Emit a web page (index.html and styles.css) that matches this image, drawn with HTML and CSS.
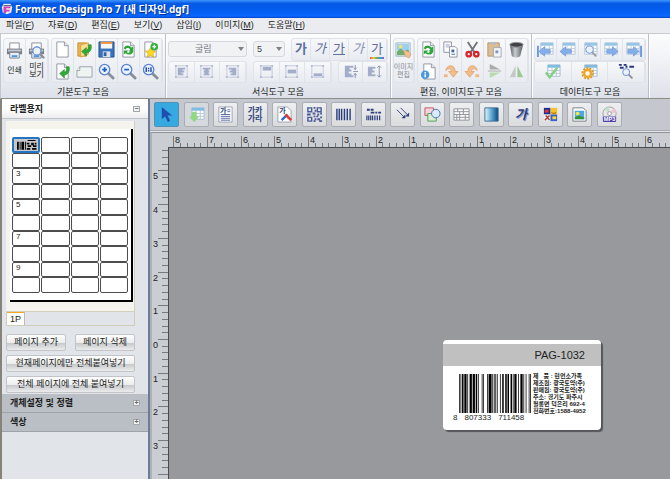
FILE: index.html
```html
<!DOCTYPE html>
<html lang="ko">
<head>
    <meta charset="utf-8">
    <title>Formtec Design Pro 7 [새 디자인.dgf]</title>
    <meta name="viewport" content="width=device-width, initial-scale=1">
    <link rel="stylesheet" href="styles.css">
</head>
<body>
<svg class="sprite" aria-hidden="true">
    <defs>
        <linearGradient id="blue-fade"><stop offset="0" stop-color="#e8f7fc"/><stop offset=".5" stop-color="#5fa9d0"/><stop offset="1" stop-color="#064a86"/></linearGradient>
        <linearGradient id="bin-fade"><stop offset="0" stop-color="#55585c"/><stop offset=".4" stop-color="#c9ccd0"/><stop offset="1" stop-color="#55585c"/></linearGradient>
    </defs>
    <symbol id="printer" viewBox="0 0 18 18">
        <path d="M4 1h10v7H4z" fill="#fff" stroke="#8a8d93"/>
        <path d="M1 7h16v6H1z" fill="#7b7f88"/>
        <path d="M2 8h14v2H2z" fill="#c4c8cf"/>
        <path d="M4 11h10v6H4z" fill="#e8f1fb" stroke="#7d828b"/>
        <path d="M6 14h6v2H6z" fill="#4f96dd"/>
    </symbol>
    <symbol id="page" viewBox="0 0 18 18">
        <path d="M3 1h8l4 4v12H3z" fill="#fff" stroke="#8f96a3"/>
        <path d="M11 1v4h4" fill="#e3e6ec" stroke="#8f96a3"/>
    </symbol>
    <symbol id="glass" viewBox="0 0 18 18">
        <path d="M11 11l5 5" stroke="#8b8f99" stroke-width="3" stroke-linecap="round"/>
        <circle cx="7" cy="7" r="5.5" fill="#e9f2fd" stroke="#5b84cd" stroke-width="1.4"/>
    </symbol>
    <symbol id="green-arrow" viewBox="0 0 18 18">
        <path d="M16 4c1 5-1 8-5 9v3l-5-5 5-4v3c2-1 3-3 2-6z" fill="#2eaa35" stroke="#1b8a28" stroke-width=".6"/>
    </symbol>
    <symbol id="open" viewBox="0 0 18 18">
        <path d="M2 2h9v14H2z" fill="#e9b552" stroke="#c98f2d"/>
        <path d="M5 4l8-2v12l-8 3z" fill="#fbdf97" stroke="#d6a043"/>
        <use href="#green-arrow"/>
    </symbol>
    <symbol id="save" viewBox="0 0 18 18">
        <path d="M1 1h16v16H1z" fill="#3973bb" stroke="#27568f"/>
        <path d="M3 1h12v7H3z" fill="#f5f6f8"/><path d="M3 1h12v2H3z" fill="#ef8d39"/>
        <path d="M5 11h8v6H5z" fill="#dfe4ec"/><path d="M6 12h3v4H6z" fill="#2f5f9d"/>
    </symbol>
    <symbol id="refresh" viewBox="0 0 18 18">
        <use href="#page"/>
        <path d="M4 8c1-4 6-4 8-1l2-1v5H9l2-2C9 7 7 7 6 9zM14 11c-1 4-6 4-8 2l-2 1V10h5l-2 2c2 1 3 0 4-1z" fill="#2da63a"/>
    </symbol>
    <symbol id="star" viewBox="0 0 18 18">
        <use href="#page"/>
        <path d="M9 7l1.600 3.300 3.700.5-2.700 2.600.7 3.600L9 15.300 5.700 17l.7-3.600L3.700 10.800l3.700-.5z" fill="#ffd91f" stroke="#d9a307" stroke-width=".7"/>
        <circle cx="13" cy="6" r="4" fill="#31b23a"/><path d="M13 4v4M11 6h4" stroke="#fff" stroke-width="1.4"/>
    </symbol>
    <symbol id="import" viewBox="0 0 18 18">
        <use href="#page"/><use href="#green-arrow"/>
    </symbol>
    <symbol id="sheet" viewBox="0 0 18 18">
        <path d="M4 4h13v11H1V8z" fill="#eef4f2" stroke="#97a3ab"/><path d="M4 4v4H1" fill="#fff" stroke="#97a3ab"/>
    </symbol>
    <symbol id="zoom-in" viewBox="0 0 18 18">
        <use href="#glass"/><path d="M7 4.500v5M4.500 7h5" stroke="#1e5ad0" stroke-width="1.800"/>
    </symbol>
    <symbol id="zoom-out" viewBox="0 0 18 18">
        <use href="#glass"/><path d="M4.500 7h5" stroke="#1e5ad0" stroke-width="1.800"/>
    </symbol>
    <symbol id="zoom-one" viewBox="0 0 18 18">
        <use href="#glass"/><path d="M4.500 4.500v5M9.500 4.500v5M7 5v1.500M7 7.500v1.500" stroke="#1e4ab0" stroke-width="1.500"/>
    </symbol>
    <symbol id="preview" viewBox="0 0 18 18">
        <use href="#printer"/><use href="#glass" x="4" y="4" width="14" height="14"/>
    </symbol>
    <symbol id="frame" viewBox="0 0 18 18">
        <path d="M3 3h12v12H3z" fill="none" stroke="#c3c9dc"/>
        <path d="M2 2h2v2H2zM14 2h2v2h-2zM2 14h2v2H2zM14 14h2v2h-2z" fill="#b3bbd3"/>
    </symbol>
    <symbol id="align-left" viewBox="0 0 18 18"><use href="#frame"/><path d="M5 5h8v2h-3v1h2v2H9v1h2v2H5z" fill="#a3acc8"/></symbol>
    <symbol id="align-center" viewBox="0 0 18 18"><use href="#frame"/><path d="M5 5h8v2h-2v1h1v2h-1v1h1v2H6v-2h1v-1H6V8h1V7H5z" fill="#a3acc8"/></symbol>
    <symbol id="align-right" viewBox="0 0 18 18"><use href="#frame"/><path d="M13 5H5v2h3v1H6v2h3v1H7v2h6z" fill="#a3acc8"/></symbol>
    <symbol id="align-top" viewBox="0 0 18 18"><use href="#frame"/><path d="M5 4h9v4H5z" fill="#a3acc8"/></symbol>
    <symbol id="align-middle" viewBox="0 0 18 18"><use href="#frame"/><path d="M5 7h9v4H5z" fill="#a3acc8"/></symbol>
    <symbol id="align-bottom" viewBox="0 0 18 18"><use href="#frame"/><path d="M5 11h9v3H5z" fill="#a3acc8"/></symbol>
    <symbol id="line-tight" viewBox="0 0 18 18">
        <path d="M3 3h9v2H8v2h2v2H7v2h3v2h2v2H3z" fill="#a3acc8"/><path d="M14 2v5M12.500 5l1.500 2 1.500-2M14 16v-5M12.500 13l1.500-2 1.500 2M12 9h5" stroke="#8994b5" fill="none"/>
    </symbol>
    <symbol id="line-wide" viewBox="0 0 18 18">
        <path d="M2 4h8v2H7v2h2v2H6v2h4v2H2z" fill="#a3acc8"/><path d="M14 3v12M12 5l2-2 2 2M12 13l2 2 2-2" stroke="#8994b5" fill="none"/>
    </symbol>
    <symbol id="picture" viewBox="0 0 18 18">
        <path d="M1 1h15v14H1z" fill="#fff" stroke="#7e9fb8"/><path d="M2 2h13v7H2z" fill="#86c6ee"/>
        <circle cx="6" cy="5" r="2" fill="#f6e04a"/><path d="M2 10l4-3 4 3 3-2 2 1v5H2z" fill="#4c9d4e"/>
    </symbol>
    <symbol id="picture-edit" viewBox="0 0 18 18"><use href="#picture"/><path d="M9 9l5 1 3 3-2 4-4-2z" fill="#f2b27a" stroke="#cf8144" stroke-width=".6"/></symbol>
    <symbol id="copy" viewBox="0 0 18 18">
        <path d="M2 1h8v11H2z" fill="#fff" stroke="#8d939e"/><path d="M4 3h4v4H4z" fill="#c5cde0"/>
        <path d="M8 6h6l2 2v9H8z" fill="#fff" stroke="#8d939e"/><path d="M10 9h3v3h-3z" fill="#4567a9"/><path d="M10 14h4" stroke="#4567a9"/>
    </symbol>
    <symbol id="cut" viewBox="0 0 18 18">
        <path d="M4 1l7 11M14 1L7 12" stroke="#70757c" stroke-width="2"/>
        <g fill="none" stroke="#d8232b" stroke-width="2.400"><circle cx="5" cy="14" r="2.400"/><circle cx="13" cy="14" r="2.400"/></g>
    </symbol>
    <symbol id="paste" viewBox="0 0 18 18">
        <path d="M2 2h12v14H2z" fill="#ddbd93" stroke="#b79568"/><path d="M5 1h6v3H5z" fill="#b9bcc3"/>
        <path d="M8 7h8v10H8z" fill="#f4f6fa" stroke="#a3a9b7"/><path d="M10 10h3v3h-3z" fill="#7f95c3"/>
    </symbol>
    <symbol id="trash" viewBox="0 0 18 18">
        <path d="M2 4l2 12c1 2 8 2 9 0l3-12z" fill="url(#bin-fade)"/><ellipse cx="9" cy="4" rx="7" ry="2.500" fill="#3f4246" stroke="#909499"/>
    </symbol>
    <symbol id="info" viewBox="0 0 18 18">
        <use href="#page" x="1"/><circle cx="5.500" cy="12.500" r="4.500" fill="#4b98dc"/><path d="M5.500 9.500v1.500M5.500 12v3" stroke="#fff" stroke-width="1.600"/>
    </symbol>
    <symbol id="rotate" viewBox="0 0 18 18">
        <path d="M4 8c1-7 10-7 10 1h3l-5 6-5-6h3c0-3-3-4-6-1z" fill="#f3bd8b" stroke="#dd9a5e" stroke-width=".7"/>
        <path d="M2 12h4v3H2z" fill="#f0b783"/>
    </symbol>
    <symbol id="flip-v" viewBox="0 0 18 18"><path d="M4 1l11 6H4z" fill="#a9ada9"/><path d="M4 16l11-6H4z" fill="#b9d9ae"/><path d="M2 8.500h14" stroke="#aaa"/></symbol>
    <symbol id="flip-h" viewBox="0 0 18 18"><path d="M8 3v12H2z" fill="#c3c7ca"/><path d="M10 3v12h6z" fill="#9cc794"/></symbol>
    <symbol id="grid" viewBox="0 0 18 18">
        <path d="M4 2h13v12H4z" fill="#fff" stroke="#a8bcd2"/><path d="M4 2h13v3H4z" fill="#7fbbe2"/>
        <path d="M4 8h13M4 11h13M8.500 5v9M13 5v9" stroke="#b7c6d6"/>
    </symbol>
    <symbol id="arrow-left" viewBox="0 0 18 18"><path d="M1 11l6-5v3h6v4H7v3z" fill="#6a9fe9" stroke="#3c77cf" stroke-width=".6"/></symbol>
    <symbol id="arrow-right" viewBox="0 0 18 18"><path d="M16 11l-6-5v3H4v4h6v3z" fill="#6a9fe9" stroke="#3c77cf" stroke-width=".6"/></symbol>
    <symbol id="first" viewBox="0 0 18 18"><use href="#grid"/><use href="#arrow-left" x="1"/><path d="M1 5v12" stroke="#4a84dc" stroke-width="2"/></symbol>
    <symbol id="prev" viewBox="0 0 18 18"><use href="#grid"/><use href="#arrow-left"/></symbol>
    <symbol id="find" viewBox="0 0 18 18"><use href="#grid"/><use href="#glass" x="4" y="4" width="13" height="13"/></symbol>
    <symbol id="next" viewBox="0 0 18 18"><use href="#grid" x="-2"/><use href="#arrow-right"/></symbol>
    <symbol id="last" viewBox="0 0 18 18"><use href="#grid" x="-2"/><use href="#arrow-right" x="-1"/><path d="M17 5v12" stroke="#4a84dc" stroke-width="2"/></symbol>
    <symbol id="check" viewBox="0 0 18 18"><use href="#grid"/><path d="M2 10l4 5 8-10" fill="none" stroke="#86cf86" stroke-width="2.600"/></symbol>
    <symbol id="gear" viewBox="0 0 18 18">
        <use href="#grid"/><circle cx="7" cy="11" r="5.500" fill="none" stroke="#dc951c" stroke-width="2" stroke-dasharray="2 1.400"/>
        <circle cx="7" cy="11" r="3.600" fill="#fff" stroke="#efa92a" stroke-width="2.600"/>
    </symbol>
    <symbol id="search-code" viewBox="0 0 18 18">
        <path d="M1 2h3M6 2h3M12 4h5M2 5h4M8 4h2" stroke="#27397c" stroke-width="2"/><use href="#glass" x="4" y="5" width="12" height="12"/>
    </symbol>
    <symbol id="cursor" viewBox="0 0 18 18"><path d="M4 1v13l3.500-3 3 6 2.500-1.500-3-5.500H15z" fill="#1f4fae"/></symbol>
    <symbol id="grid-down" viewBox="0 0 18 18"><use href="#grid"/><path d="M4 6h5v5h3l-5.500 6L1 11h3z" fill="#8fd982"/></symbol>
    <symbol id="text-page" viewBox="0 0 18 18">
        <path d="M2 1h14v16H2z" fill="#fff" stroke="#9ba2b4"/><path d="M11 4h3M11 6h3M4 9h10M4 11h10M4 13h10M4 15h10" stroke="#5767a0"/>
    </symbol>
    <symbol id="text-pen" viewBox="0 0 18 18">
        <path d="M2 1h10l4 4v12H2z" fill="#fff" stroke="#9ba2b4"/><path d="M6 15l6-6" stroke="#2767cf" stroke-width="2.400"/><path d="M10 9l6 6" stroke="#e03a32" stroke-width="2.800"/>
    </symbol>
    <symbol id="qr" viewBox="0 0 18 18">
        <path d="M2 2h4v4H2zM12 2h4v4h-4zM2 12h4v4H2z" fill="none" stroke="#4b5b96" stroke-width="1.500"/>
        <path d="M8 2h2M9 5h2M7 8h3M1 9h4M12 9h2M15 8h2M8 11h2M11 11h2M15 12h2M9 14h2M12 14h3M8 16h2M14 16h3" stroke="#4b5b96" stroke-width="2"/>
    </symbol>
    <symbol id="bars" viewBox="0 0 18 18"><path d="M2 3v12M4.500 3v12M7 3v12M10 3v12M13 3v12M16 3v12" stroke="#2b3d7e" stroke-width="1.500"/></symbol>
    <symbol id="bars-text" viewBox="0 0 18 18">
        <path d="M2 4h3M6 4h3M6 7h4M11 7h2M14 7h3" stroke="#2f3f7d" stroke-width="2"/><path d="M2 10v5M4 10v5M6 10v5M8 10v5M10.500 10v5M13 10v5M15.500 10v5" stroke="#2f3f7d" stroke-width="1.300"/>
    </symbol>
    <symbol id="lines" viewBox="0 0 18 18"><path d="M3 4l8 8M7 2l8 8" stroke="#31427f"/><path d="M12 13H8l4-4zM16 11h-4l4-4z" fill="#31427f"/></symbol>
    <symbol id="shapes" viewBox="0 0 18 18">
        <path d="M1 2h9v8H1z" fill="#f6d3d8" stroke="#c0566a"/><path d="M4 8h9v8H4z" fill="#d8efd2" stroke="#4f9a52"/><circle cx="12.500" cy="8" r="4.500" fill="#dcebfa" stroke="#3f6fb6"/>
    </symbol>
    <symbol id="table" viewBox="0 0 18 18"><path d="M1 3h16v12H1zM1 6h16M1 9h16M1 12h16M5 3v3M11 3v6M7 6v9M13 9v6M4 9v6" fill="#fbfbfb" stroke="#8f9399"/></symbol>
    <symbol id="gradient" viewBox="0 0 18 18"><path d="M2 2h14v14H2z" fill="url(#blue-fade)" stroke="#3d6a92"/></symbol>
    <symbol id="clipart" viewBox="0 0 18 18">
        <path d="M2 2h7v7H2z" fill="#1d2c9b"/><path d="M3 4h4v3H3z" fill="#e5352c"/><path d="M9 2h7v7H9z" fill="#f4c22b"/><path d="M10 7c2 1 3 1 5 0" stroke="#a55a00" fill="none"/>
        <path d="M2 9h7v7H2z" fill="#e9eef8"/><path d="M3 15l5-5M4 10l4 5" stroke="#b13d2f" stroke-width="1.500"/><path d="M9 9h7v7H9z" fill="#3a61c7"/><path d="M11 11h4v3h-4z" fill="#f2da3c"/>
    </symbol>
    <symbol id="photo" viewBox="0 0 18 18">
        <path d="M2 2h11l3 3v11H2z" fill="#fff" stroke="#777d84"/><path d="M4 5h10v9H4z" fill="#4ca8e4"/><circle cx="7" cy="8" r="2" fill="#f7e93e"/><path d="M4 12l4-2 6 2v2H4z" fill="#36933c"/>
    </symbol>
    <symbol id="disc" viewBox="0 0 18 18">
        <circle cx="9" cy="8" r="7" fill="#e8e6ea" stroke="#a3a1a8"/><path d="M9 8L4 3.500A7 7 0 0 1 8 1z" fill="#bfe3c4"/><path d="M9 8l5-5.500a7 7 0 0 1 2 4z" fill="#f1c2d2"/>
        <circle cx="9" cy="8" r="2" fill="#fff" stroke="#999"/><rect x="2" y="11" width="14" height="6" rx="1" fill="#5043ad"/>
        <text x="9" y="16" font-size="6" font-weight="bold" text-anchor="middle" fill="#fff">MP3</text>
    </symbol>
</svg>

<header class="titlebar">
    <svg class="logo" viewBox="0 0 14 14"><path d="M3 1h8l2 4-1 6-5 2-5-2-1-6z" fill="#e8ebf2"/><path d="M3 4h8v2H6v2h4v2H6v2H3z" fill="#d23fb0"/><path d="M3 3h9" stroke="#444c63"/></svg>
    <h1>Formtec Design Pro 7 [새 디자인.dgf]</h1>
</header>
<nav class="menubar">
    <a href="#file">파일(<u>F</u>)</a>
    <a href="#data">자료(<u>D</u>)</a>
    <a href="#edit">편집(<u>E</u>)</a>
    <a href="#view">보기(<u>V</u>)</a>
    <a href="#insert">삽입(<u>I</u>)</a>
    <a href="#image">이미지(<u>M</u>)</a>
    <a href="#help">도움말(<u>H</u>)</a>
</nav>

<div class="ribbon">
    <section class="group">
        <div class="group-body">
            <div class="tools tall">
                <button><svg><use href="#printer"/></svg><span>인쇄</span></button>
                <button><svg><use href="#preview"/></svg><span>미리<br>보기</span></button>
            </div>
            <div class="tools">
                <button aria-label="새로 만들기"><svg><use href="#page"/></svg></button>
                <button aria-label="열기"><svg><use href="#open"/></svg></button>
                <button aria-label="저장"><svg><use href="#save"/></svg></button>
                <button aria-label="바꾸기"><svg><use href="#refresh"/></svg></button>
                <button aria-label="즐겨찾기"><svg><use href="#star"/></svg></button>
                <button aria-label="가져오기"><svg><use href="#import"/></svg></button>
                <button aria-label="용지"><svg><use href="#sheet"/></svg></button>
                <button aria-label="확대"><svg><use href="#zoom-in"/></svg></button>
                <button aria-label="축소"><svg><use href="#zoom-out"/></svg></button>
                <button aria-label="원래 크기"><svg><use href="#zoom-one"/></svg></button>
            </div>
        </div>
        <h2>기본도구 모음</h2>
    </section>
    <section class="group">
        <div class="group-body format">
            <div class="format-row">
                <select class="font-name" aria-label="글꼴"><option>굴림</option></select>
                <select class="font-size" aria-label="크기"><option>5</option></select>
                <div class="tools letters">
                    <button class="bold">가</button>
                    <button class="italic">가</button>
                    <button class="underline">가</button>
                    <button class="outline">가</button>
                    <button class="color">가</button>
                </div>
            </div>
            <div class="format-row">
                <div class="tools wide">
                    <button aria-label="왼쪽"><svg><use href="#align-left"/></svg></button>
                    <button aria-label="가운데"><svg><use href="#align-center"/></svg></button>
                    <button aria-label="오른쪽"><svg><use href="#align-right"/></svg></button>
                </div>
                <div class="tools wide">
                    <button aria-label="위"><svg><use href="#align-top"/></svg></button>
                    <button aria-label="중간"><svg><use href="#align-middle"/></svg></button>
                    <button aria-label="아래"><svg><use href="#align-bottom"/></svg></button>
                </div>
                <div class="tools pair">
                    <button aria-label="줄 간격 좁게"><svg><use href="#line-tight"/></svg></button>
                    <button aria-label="줄 간격 넓게"><svg><use href="#line-wide"/></svg></button>
                </div>
            </div>
        </div>
        <h2>서식도구 모음</h2>
    </section>
    <section class="group">
        <div class="group-body">
            <div class="tools tall single">
                <button class="disabled"><svg><use href="#picture-edit"/></svg><span>이미지<br>편집</span></button>
            </div>
            <div class="tools">
                <button aria-label="복제"><svg><use href="#refresh"/></svg></button>
                <button aria-label="복사"><svg><use href="#copy"/></svg></button>
                <button aria-label="잘라내기"><svg><use href="#cut"/></svg></button>
                <button aria-label="붙여넣기"><svg><use href="#paste"/></svg></button>
                <button aria-label="삭제"><svg><use href="#trash"/></svg></button>
                <button aria-label="정보"><svg><use href="#info"/></svg></button>
                <button aria-label="오른쪽 회전"><svg><use href="#rotate"/></svg></button>
                <button aria-label="왼쪽 회전"><svg class="mirror"><use href="#rotate"/></svg></button>
                <button aria-label="상하 대칭"><svg><use href="#flip-v"/></svg></button>
                <button aria-label="좌우 대칭"><svg><use href="#flip-h"/></svg></button>
            </div>
        </div>
        <h2>편집, 이미지도구 모음</h2>
    </section>
    <section class="group">
        <div class="group-body stacked">
            <div class="tools faint">
                <button aria-label="처음"><svg><use href="#first"/></svg></button>
                <button aria-label="이전"><svg><use href="#prev"/></svg></button>
                <button aria-label="찾기"><svg><use href="#find"/></svg></button>
                <button aria-label="다음"><svg><use href="#next"/></svg></button>
                <button aria-label="마지막"><svg><use href="#last"/></svg></button>
            </div>
            <div class="tools thirds">
                <button aria-label="선택"><svg><use href="#check"/></svg></button>
                <button aria-label="설정"><svg><use href="#gear"/></svg></button>
                <button aria-label="코드 검색"><svg><use href="#search-code"/></svg></button>
            </div>
        </div>
        <h2>데이터도구 모음</h2>
    </section>
</div>

<div class="workspace">
    <aside class="sidebar">
        <h2 class="panel-title">라벨용지<button class="toggle" aria-label="접기">−</button></h2>
        <div class="panel">
            <div class="preview">
                <div class="sheet">
                    <div class="cells" id="cells"></div>
                </div>
            </div>
            <div class="tabs"><button class="tab">1P</button></div>
            <div class="actions">
                <button>페이지 추가</button>
                <button>페이지 삭제</button>
                <button class="full">현재페이지에만 전체붙여넣기</button>
                <button class="full">전체 페이지에 전체 붙여넣기</button>
            </div>
        </div>
        <h2 class="panel-title closed">개체설정 및 정렬<button class="toggle" aria-label="펼치기">+</button></h2>
        <h2 class="panel-title closed">색상<button class="toggle" aria-label="펼치기">+</button></h2>
    </aside>
    <main class="editor">
        <div class="toolbar">
            <div class="toolbar-items">
                <button class="active" aria-label="선택"><svg><use href="#cursor"/></svg></button>
                <button class="off" aria-label="데이터"><svg><use href="#grid-down"/></svg></button>
                <button class="with-text"><svg><use href="#text-page"/></svg><span>가</span></button>
                <button class="four">가카<br>가라</button>
                <button class="with-text"><svg><use href="#text-pen"/></svg><span>가</span></button>
                <button aria-label="QR 코드"><svg><use href="#qr"/></svg></button>
                <button aria-label="바코드"><svg><use href="#bars"/></svg></button>
                <button aria-label="우편 바코드"><svg><use href="#bars-text"/></svg></button>
                <button aria-label="선"><svg><use href="#lines"/></svg></button>
                <button aria-label="도형"><svg><use href="#shapes"/></svg></button>
                <button aria-label="표"><svg><use href="#table"/></svg></button>
                <button aria-label="그라데이션"><svg><use href="#gradient"/></svg></button>
                <button class="word-art">가</button>
                <button aria-label="클립아트"><svg><use href="#clipart"/></svg></button>
                <button aria-label="사진"><svg><use href="#photo"/></svg></button>
                <button aria-label="MP3"><svg><use href="#disc"/></svg></button>
            </div>
        </div>
        <div class="stage">
            <svg class="ruler-x" id="ruler-x"></svg>
            <svg class="ruler-y" id="ruler-y"></svg>
            <div class="canvas">
                <article class="label">
                    <h3>PAG-1032</h3>
                    <div class="label-body">
                        <div class="barcode">
                            <svg id="barcode" viewBox="0 0 95 10" preserveAspectRatio="none"></svg>
                            <div class="digits"><span>8</span><span>807333</span><span>711458</span></div>
                        </div>
                        <p>제 &nbsp; 품 : 현언소가족<br>제조원: 광국토약(주)<br>판매원: 광국토약(주)<br>주소: 경기도 파주시<br>월롱면 덕은리 692-4<br>전화번호:1588-4952</p>
                    </div>
                </article>
            </div>
        </div>
    </main>
</div>
<script src="script.js"></script>
</body>
</html>
```

FILE: styles.css
```css
:root {
    --text: #1c1e22;
    --panel: #e1e5ea;
    --metal: #c4c8ce;
    --canvas: #98999d;
    --navy: #5f6f9f;
}

*, *:before, *:after {
    box-sizing: border-box;
}

body {
    margin: 0;
    height: 100vh;
    display: flex;
    flex-direction: column;
    overflow: hidden;
    font-family: "Liberation Sans", "Noto Sans CJK KR", sans-serif;
    font-size: 9px;
    line-height: 12px;
    color: var(--text);
    background: var(--panel);
}

h1, h2, h3, p {
    margin: 0;
    font-size: inherit;
}

button, select {
    margin: 0;
    padding: 0;
    border: 0;
    background: none;
    font: inherit;
    color: inherit;
}

button svg {
    width: 17px;
    height: 17px;
    flex: none;
}

.sprite {
    position: absolute;
    width: 0;
    height: 0;
}

.titlebar {
    flex: none;
    display: flex;
    align-items: center;
    gap: 2px;
    height: 18px;
    padding: 0 1px;
    background: linear-gradient(#3d95ff, #0458e4 20%, #0560f5 70%, #0868ff 90%, #0040c0);
    color: #fff;
}

.titlebar h1 {
    font: bold 10px/16px "Noto Sans", "Noto Sans CJK KR", sans-serif;
    text-shadow: 1px 1px 0 #0a2f86;
}

.logo {
    width: 12px;
    height: 12px;
}

.menubar {
    flex: none;
    display: flex;
    gap: 14px;
    height: 16px;
    padding: 0 6px;
    line-height: 14px;
    background: #ebecf0;
    border-bottom: 1px solid #c7c9cd;
}

.menubar a {
    color: inherit;
    text-decoration: none;
}

.ribbon {
    flex: none;
    display: flex;
    height: 65px;
    border-left: 1px solid #c3c7ce;
    border-bottom: 1px solid #8d8e88;
    background: linear-gradient(#fcfcfd, #eef0f4 50%, #dde1e9);
}

.group {
    padding: 4px 2px 0;
    border-right: 1px solid #bbc0c9;
    box-shadow: 1px 0 0 #fff;
}

.group h2 {
    margin-top: 3px;
    font-weight: normal;
    text-align: center;
}

.group-body {
    display: flex;
    gap: 2px;
    height: 45px;
}

.group-body.format, .group-body.stacked {
    flex-direction: column;
    gap: 0;
}

.tools {
    display: grid;
    grid-template-columns: repeat(5, 22px);
    grid-auto-rows: 1fr;
    border: 1px solid #dfe2e8;
    border-radius: 3px;
    background: linear-gradient(#f7f8fa, #e8ebf0);
}

.tools button {
    display: flex;
    align-items: center;
    justify-content: center;
    border-right: 1px solid #e0e3e9;
}

.stacked .tools {
    flex: 1;
}

.tools.tall {
    grid-template-columns: repeat(2, 22px);
}

.tools.tall.single {
    grid-template-columns: 20px;
}

.tools.tall button {
    flex-direction: column;
    justify-content: flex-start;
    padding-top: 3px;
    font-size: 8px;
    line-height: 8px;
    white-space: nowrap;
}

.tools.tall span {
    display: flex;
    align-items: center;
    flex: 1;
}

.tools.tall .disabled {
    font-size: 7px;
    color: #85888f;
}

.tools.faint svg, .disabled svg {
    opacity: 0.8;
}

.tools.thirds {
    grid-template-columns: repeat(3, 1fr);
}

.mirror {
    transform: scaleX(-1);
}

.format-row {
    display: flex;
    flex: 1;
    align-items: center;
    gap: 6px;
}

.format-row select {
    height: 16px;
    appearance: none;
    border: 1px solid #d5d8de;
    border-radius: 3px;
    background: #f1f2f4 url("data:image/svg+xml,%3csvg xmlns='http://www.w3.org/2000/svg' viewBox='0 0 6 4'%3e%3cpath fill='%237d8088' d='M0 0h6L3 4z'/%3e%3c/svg%3e") right 2px center / 6px 4px no-repeat;
    color: #75787e;
}

.format-row .font-name {
    width: 79px;
    padding-left: 26px;
}

.format-row .font-size {
    width: 32px;
    padding-left: 3px;
    color: #3c3e43;
}

.tools.letters {
    grid-template-columns: repeat(5, 19px);
    align-self: stretch;
    font-size: 13px;
    line-height: 16px;
    color: var(--navy);
}

.letters .bold {
    font-weight: bold;
}

.letters .italic {
    font-style: italic;
}

.letters .underline {
    text-decoration: underline;
}

.letters .outline {
    font-style: italic;
    color: #8792b6;
}

.letters .color {
    background: linear-gradient(90deg, #ef5350, #f5c431, #55b65b, #3c9ce0, #a052c5) center 18px / 14px 2px no-repeat;
}

.tools.wide {
    grid-template-columns: repeat(3, 1fr);
    width: 79px;
    align-self: stretch;
}

.tools.pair {
    grid-template-columns: repeat(2, 1fr);
    flex: 1;
    align-self: stretch;
}

.workspace {
    flex: 1;
    display: flex;
    min-height: 0;
}

.sidebar {
    flex: none;
    width: 150px;
    border-left: 2px solid #85837c;
    border-right: 2px solid #6c7b99;
    background: var(--panel);
}

.panel-title {
    display: flex;
    align-items: center;
    justify-content: space-between;
    height: 20px;
    padding: 0 8px;
    border-bottom: 1px solid #c0c4c9;
    background: linear-gradient(#fff 50%, #ececee);
}

.panel-title.closed {
    height: 19px;
    border-bottom-color: #9da3a8;
    background: #b9bfc4;
}

.toggle {
    width: 7px;
    height: 6px;
    border: 1px solid #a3a8ad;
    background: #f1f2f3;
    font-size: 7px;
    line-height: 4px;
    color: #666;
}

.panel {
    padding: 2px 13px 1px 4px;
}

.preview {
    padding: 8px 1px 9px 0;
    border-right: 1px solid #d2cfbd;
    border-bottom: 1px solid #d2cfbd;
    background: #f4f3ee;
}

.sheet {
    margin-left: 4px;
    padding: 8px 3px 7px 2px;
    border-right: 2px solid #000;
    border-bottom: 2px solid #000;
    background: #fff;
}

.cells {
    display: grid;
    grid-template-columns: repeat(4, 1fr);
    grid-template-rows: repeat(10, 1fr);
    column-gap: 1px;
    height: 156px;
}

.cell {
    padding-left: 3px;
    border: 1px solid #4d4d4d;
    border-radius: 2px;
    font-size: 8px;
    line-height: 9px;
}

.cell.selected {
    padding: 1px 0 1px 3px;
    border: 2px solid #2474c4;
    background: #c6c8cb;
}

.cell svg {
    display: block;
    width: 100%;
    height: 100%;
}

.tabs {
    display: flex;
    height: 14px;
    border: 1px solid #cfccb9;
    border-top: 0;
}

.tab {
    width: 18px;
    border-top: 1px solid #f5a623;
    border-right: 1px solid #b9bcbf;
    background: #fff;
}

.actions {
    display: grid;
    grid-template-columns: 1fr 1fr;
    gap: 4px 9px;
    padding-top: 8px;
}

.actions button {
    height: 17px;
    border: 1px solid #c2c4c7;
    border-radius: 2px;
    background: linear-gradient(#fdfdfd, #ededee 50%, #c6c8cb 55%, #ececed);
    line-height: 13px;
    white-space: nowrap;
}

.actions .full {
    grid-column: 1 / -1;
}

.editor {
    flex: 1;
    display: flex;
    flex-direction: column;
    min-width: 0;
}

.toolbar {
    flex: none;
    padding: 3px 4px;
    border-bottom: 1px solid #a5a9ad;
    background: var(--metal);
}

.toolbar-items {
    display: flex;
    justify-content: space-between;
    max-width: 468px;
}

.toolbar button {
    display: flex;
    align-items: center;
    justify-content: center;
    width: 25px;
    height: 25px;
    border: 1px solid #aaadb2;
    border-radius: 2px;
    background: linear-gradient(#eeeff0, #dadbdd);
    color: #2e3f7c;
}

.toolbar .active {
    border-color: #4b93b8;
    background: #36a9e0;
}

.toolbar .off {
    background: #d5d8dc;
}

.toolbar .with-text {
    display: grid;
}

.with-text svg, .with-text span {
    grid-area: 1 / 1;
}

.with-text span {
    align-self: start;
    justify-self: start;
    padding-left: 3px;
    font-size: 7px;
    font-weight: bold;
    line-height: 15px;
}

.toolbar .four {
    font-size: 8px;
    font-weight: bold;
    line-height: 8px;
}

.toolbar .word-art {
    font-size: 13px;
    font-style: italic;
    font-weight: bold;
    text-shadow: 1px 1px 0 #8d9cc8;
}

.stage {
    flex: 1;
    display: grid;
    grid-template-columns: 16px 1fr;
    grid-template-rows: 14px 1fr;
    min-height: 0;
    margin-top: 1px;
    border-top: 1px solid #8e9297;
    border-left: 2px solid #aeb2b7;
    background: #cacdd1;
}

.ruler-x {
    grid-column: 1 / -1;
    width: 100%;
    height: 14px;
}

.ruler-y {
    width: 16px;
    height: 100%;
}

.ruler-x text, .ruler-y text {
    font-size: 9px;
    fill: #222;
}

.ruler-x path, .ruler-y path {
    stroke: #77797d;
}

.canvas {
    position: relative;
    overflow: hidden;
    border-top: 1px solid #4a4b4e;
    border-left: 1px solid #4a4b4e;
    background: var(--canvas);
}

.label {
    position: absolute;
    left: 274px;
    top: 192px;
    width: 158px;
    padding: 4px 0 7px;
    border-radius: 4px;
    background: #fff;
    box-shadow: 2px 2px 1px #55565a;
}

.label h3 {
    padding-right: 16px;
    background: #c0c0c0;
    font-size: 11px;
    font-weight: normal;
    line-height: 22px;
    text-align: right;
}

.label-body {
    display: flex;
    gap: 2px;
    padding: 7px 0 0 10px;
}

.barcode {
    width: 78px;
}

.barcode svg {
    display: block;
    width: 72px;
    height: 39px;
    margin: 1px 0 0 6px;
}

.digits {
    display: flex;
    gap: 7px;
    font-size: 8px;
    line-height: 10px;
}

.label p {
    font-size: 6px;
    font-weight: bold;
    line-height: 7px;
    white-space: nowrap;
}
```

FILE: script.js
```js
const UNIT = 33.7;

// horizontal ruler: a tick every fifth of a unit, zero at x = 291
const rulerX = document.getElementById('ruler-x');
const widthX = rulerX.getBoundingClientRect().width;
let ticks = '';
let numbers = '';
for (let i = -40; 291 + i * UNIT / 5 < widthX; i++) {
    const x = Math.round(291 + i * UNIT / 5);
    if (i % 5 === 0) {
        ticks += `M${x + 0.5} 3v11`;
        if (x < widthX - 10) numbers += `<text x="${x + 2}" y="10">${Math.abs(i / 5)}</text>`;
    } else {
        ticks += `M${x + 0.5} 10v4`;
    }
}
rulerX.innerHTML = `<path d="${ticks}"/>${numbers}`;

// vertical ruler
const rulerY = document.getElementById('ruler-y');
const heightY = rulerY.getBoundingClientRect().height;
ticks = '';
numbers = '';
for (let i = -28; 192 + i * UNIT / 5 < heightY; i++) {
    const y = Math.round(192 + i * UNIT / 5);
    if (i % 5 === 0) {
        ticks += `M6 ${y + 0.5}h10`;
        if (y < heightY - 10) numbers += `<text x="1" y="${y + 9}">${Math.abs(i / 5)}</text>`;
    } else {
        ticks += `M10 ${y + 0.5}h6`;
    }
}
rulerY.innerHTML = `<path d="${ticks}"/>${numbers}`;

// EAN-13 bars
function ean13(code) {
    const L = ['0001101', '0011001', '0010011', '0111101', '0100011', '0110001', '0101111', '0111011', '0110111', '0001011'];
    const parity = ['LLLLLL', 'LLGLGG', 'LLGGLG', 'LLGGGL', 'LGLLGG', 'LGGLLG', 'LGGGLL', 'LGLGLG', 'LGLGGL', 'LGGLGL'][code[0]];
    const invert = s => s.replace(/./g, b => 1 - b);
    let bits = '101';
    for (let i = 1; i < 7; i++) {
        const l = L[code[i]];
        bits += parity[i - 1] === 'L' ? l : invert(l).split('').reverse().join('');
    }
    bits += '01010';
    for (let i = 7; i < 13; i++) bits += invert(L[code[i]]);
    return bits + '101';
}

const bars = [...ean13('8807333711458')].map((b, i) => b === '1' ? `M${i} 0h1v10h-1z` : '').join('');
document.getElementById('barcode').innerHTML = `<path d="${bars}"/>`;

// label sheet, 4 x 10, odd rows are numbered
const cells = document.getElementById('cells');
for (let i = 0; i < 40; i++) {
    const cell = document.createElement('div');
    cell.className = 'cell';
    const row = Math.floor(i / 4) + 1;
    if (i === 0) {
        cell.classList.add('selected');
        cell.innerHTML = '<svg viewBox="0 0 24 11" preserveAspectRatio="none"><path d="M0 2h2v9H0zM3 2h1v9H3zM5 2h3v9H5zM9 2h1v9H9zM11 3h3v2h-3zM12 6h4v2h-4zM11 9h4v2h-4zM12 0h9v1h-9zM16 3h3v3h-3zM18 6h4v2h-4zM17 9h5v2h-5zM20 3h2v2h-2z"/></svg>';
    } else if (i % 4 === 0 && row % 2) {
        cell.textContent = row;
    }
    cells.appendChild(cell);
}
```
